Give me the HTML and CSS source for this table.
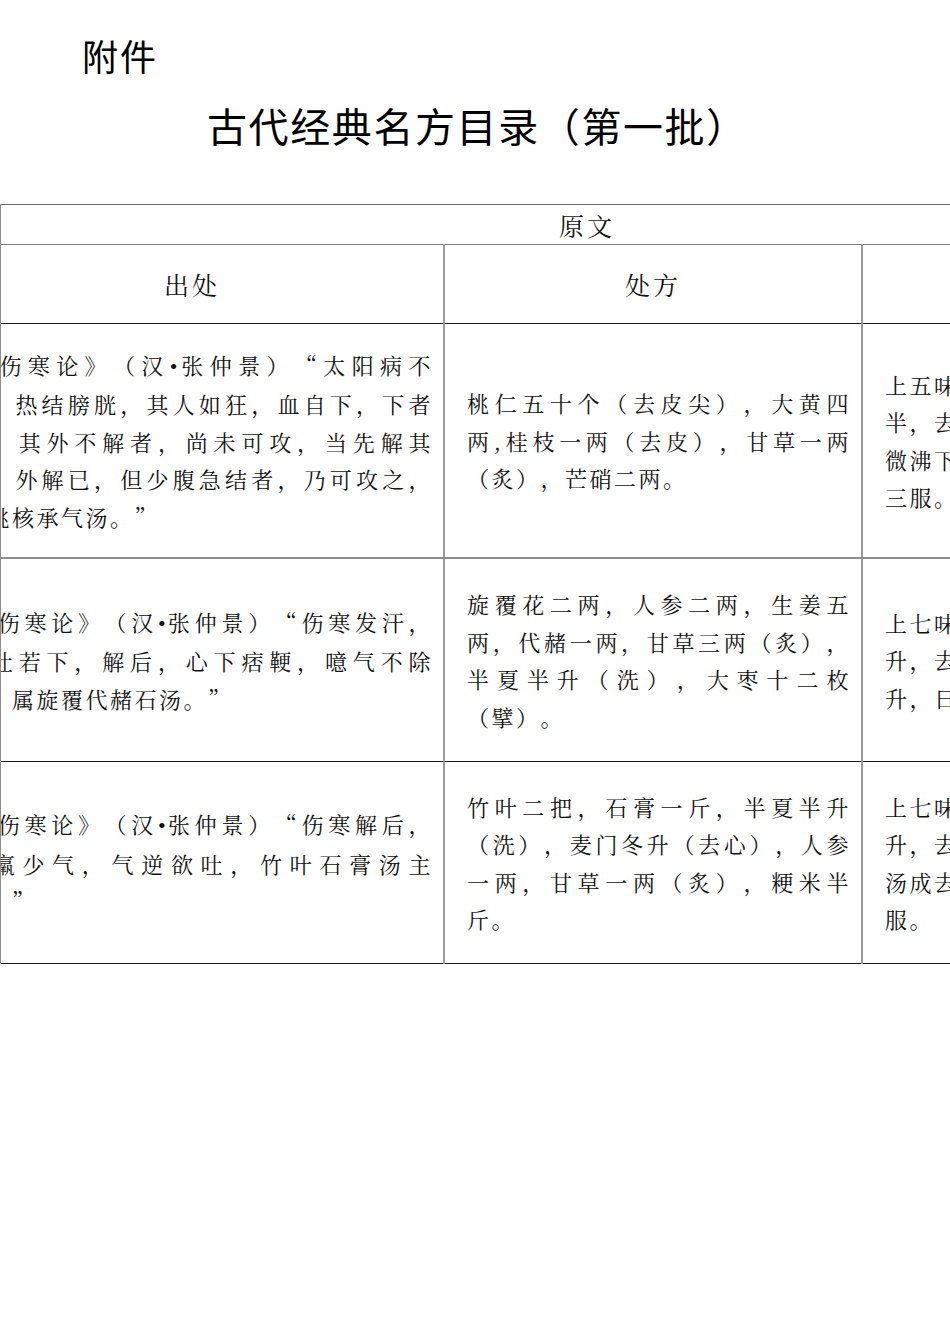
FILE: index.html
```html
<!DOCTYPE html>
<html lang="zh-CN">
<head>
<meta charset="utf-8">
<title>古代经典名方目录（第一批）</title>
<link rel="stylesheet" href="styles.css">
</head>
<body>
<div class="page">
  <p class="attach">附件</p>
  <h1 class="title">古代经典名方目录（第一批）</h1>
  <div class="tablewrap">
    <table class="catalog">
      <colgroup>
        <col class="c-src">
        <col class="c-rx">
        <col class="c-method">
      </colgroup>
      <tr class="r-head1">
        <th colspan="3" class="h-top">原文</th>
      </tr>
      <tr class="r-head2">
        <th>出处</th>
        <th>处方</th>
        <th>制法及用法</th>
      </tr>
      <tr class="r-body1">
        <td class="source">
          <span class="ln">《伤寒论》（汉<span class="dot">•</span>张仲景）“太阳病不</span>
          <span class="ln">解，热结膀胱，其人如狂，血自下，下者</span>
          <span class="ln">愈。其外不解者，尚未可攻，当先解其</span>
          <span class="ln">外。外解已，但少腹急结者，乃可攻之，</span>
          <span class="ln end">宜桃核承气汤。”</span>
        </td>
        <td>
          <span class="ln">桃仁五十个（去皮尖），大黄四</span>
          <span class="ln">两,桂枝一两（去皮），甘草一两</span>
          <span class="ln end">（炙），芒硝二两。</span>
        </td>
        <td class="method">
          <span class="ln">上五味，以水七升，煮取二升</span>
          <span class="ln">半，去滓，内芒消，更上火，</span>
          <span class="ln">微沸下火，先食温服五合，日</span>
          <span class="ln">三服。</span>
        </td>
      </tr>
      <tr class="r-body2">
        <td class="source">
          <span class="ln">《伤寒论》（汉<span class="dot">•</span>张仲景）“伤寒发汗，</span>
          <span class="ln">若吐若下，解后，心下痞鞕，噫气不除</span>
          <span class="ln end">者，属旋覆代赭石汤。”</span>
        </td>
        <td>
          <span class="ln">旋覆花二两，人参二两，生姜五</span>
          <span class="ln">两，代赭一两，甘草三两（炙），</span>
          <span class="ln">半夏半升（洗），大枣十二枚</span>
          <span class="ln end">（擘）。</span>
        </td>
        <td class="method">
          <span class="ln">上七味，以水一斗，煮取六</span>
          <span class="ln">升，去滓，再煎取三升，温服一</span>
          <span class="ln">升，日三服。</span>
        </td>
      </tr>
      <tr class="r-body3">
        <td class="source">
          <span class="ln">《伤寒论》（汉<span class="dot">•</span>张仲景）“伤寒解后，</span>
          <span class="ln">虚羸少气，气逆欲吐，竹叶石膏汤主</span>
          <span class="ln end">之。”</span>
        </td>
        <td>
          <span class="ln">竹叶二把，石膏一斤，半夏半升</span>
          <span class="ln">（洗），麦门冬升（去心），人参</span>
          <span class="ln">一两，甘草一两（炙），粳米半</span>
          <span class="ln end">斤。</span>
        </td>
        <td class="method">
          <span class="ln">上七味，以水一斗，煮取六</span>
          <span class="ln">升，去滓，内粳米，煮米熟，</span>
          <span class="ln">汤成去米，温服一升，日三</span>
          <span class="ln">服。</span>
        </td>
      </tr>
    </table>
  </div>
</div>
</body>
</html>
```

FILE: styles.css
```css
html, body {
  margin: 0;
  padding: 0;
  background: #ffffff;
}

.page {
  width: 950px;
  height: 1344px;
  overflow: hidden;
  background: #ffffff;
  color: #000000;
  font-family: "Noto Sans CJK SC", sans-serif;
  text-spacing-trim: space-all;
}

.attach {
  margin: 0;
  padding: 37px 0 0 82px;
  font-size: 36px;
  letter-spacing: 2px;
  line-height: 1;
  font-weight: 400;
}

.title {
  margin: 32px 0 0 0;
  padding-left: 207px;
  font-size: 40px;
  letter-spacing: 1.6px;
  line-height: 1;
  font-weight: 400;
}

.tablewrap {
  margin-top: 59px;
  width: 949px;
  overflow: hidden;
  border-left: 1px solid #8c8c8c;
}

.catalog {
  margin-left: -62px;
  border-collapse: collapse;
  table-layout: fixed;
  width: 1294px;
  font-family: "Noto Serif CJK SC", "Noto Sans CJK SC", serif;
  color: #111111;
}

.c-src { width: 504px; }
.c-rx { width: 418px; }
.c-method { width: 372px; }

.catalog th {
  font-size: 25px;
  font-weight: 400;
  letter-spacing: 3px;
  text-align: center;
  vertical-align: middle;
  padding: 0;
  border-left: 2px solid #9a9a9a;
  border-right: 2px solid #9a9a9a;
}

.catalog td {
  font-size: 22px;
  line-height: 37.5px;
  letter-spacing: 2.5px;
  vertical-align: middle;
  padding: 0 10px 0 22px;
  border-left: 2px solid #9a9a9a;
  border-right: 2px solid #9a9a9a;
}

.r-head1 th {
  height: 39px;
  border-top: 1px solid #6f6f6f;
  border-bottom: 1px solid #7d7d7d;
}

.r-head2 th {
  height: 78px;
  border-bottom: 1px solid #1a1a1a;
}

.r-body1 td {
  height: 233px;
  border-bottom: 2px solid #8f8f8f;
}

.r-body2 td {
  height: 202px;
  border-bottom: 1px solid #1a1a1a;
}

.r-body3 td {
  height: 201px;
  border-bottom: 1px solid #1a1a1a;
}

.ln {
  display: block;
  white-space: nowrap;
  text-align: justify;
  text-align-last: justify;
  text-justify: inter-character;
}

.source .ln:first-child {
  text-indent: 8px;
}

.ln.end,
.method .ln {
  text-align: left;
  text-align-last: left;
}

.dot {
  font-family: "Liberation Serif", serif;
  letter-spacing: 0;
}
```
